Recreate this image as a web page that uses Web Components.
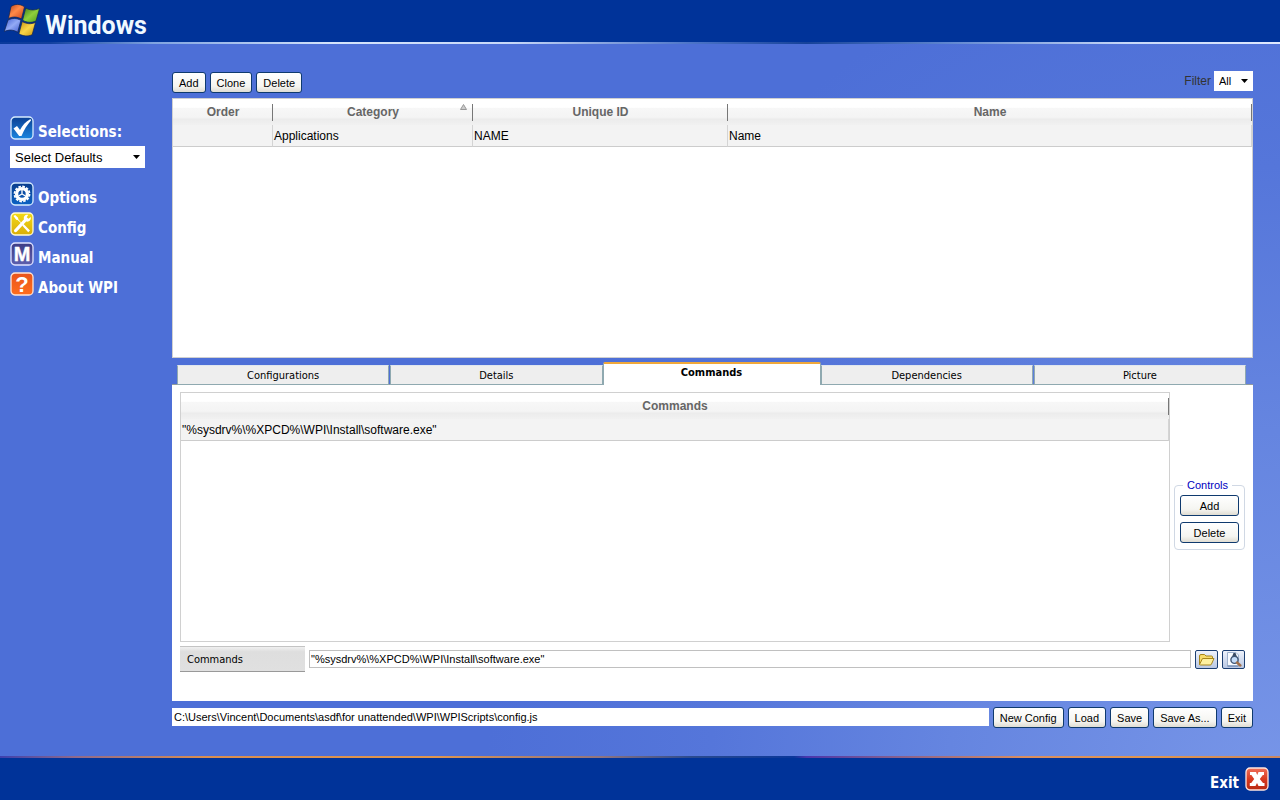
<!DOCTYPE html>
<html lang="en">
<head>
<meta charset="utf-8">
<meta name="viewport" content="width=device-width, initial-scale=1">
<title>WPI Config</title>
<style>
    html, body { margin: 0; padding: 0; }
    body {
        font-family: "Liberation Sans", Arial, sans-serif;
        font-size: 12px;
        color: #000;
        background: #4d6fd7;
        --ui: "DejaVu Sans Condensed", Tahoma, sans-serif;
    }
</style>
</head>
<body>
<wpi-shell>
    <wpi-logo slot="header"></wpi-logo>

    <wpi-sidebar slot="side"></wpi-sidebar>

    <wpi-toolbar>
        <wpi-button>Add</wpi-button>
        <wpi-button>Clone</wpi-button>
        <wpi-button>Delete</wpi-button>
        <wpi-select slot="end" label="Filter" value="All" small></wpi-select>
    </wpi-toolbar>
    <wpi-grid class="items" columns="Order:100|Category:200:sorted|Unique ID:255|Name" row="|Applications|NAME|Name"></wpi-grid>
    <wpi-tabs tabs="Configurations|Details|Commands|Dependencies|Picture" active="Commands">
        <wpi-commands></wpi-commands>
    </wpi-tabs>
    <wpi-file-bar path="C:\Users\Vincent\Documents\asdf\for unattended\WPI\WPIScripts\config.js">
        <wpi-button>New Config</wpi-button>
        <wpi-button>Load</wpi-button>
        <wpi-button>Save</wpi-button>
        <wpi-button>Save As...</wpi-button>
        <wpi-button>Exit</wpi-button>
    </wpi-file-bar>

    <wpi-link slot="footer" icon="exit" reverse>Exit</wpi-link>
</wpi-shell>

<script>
const icons = {
    check: `
        <defs><linearGradient id="g" x2="0" y2="1"><stop stop-color="#0a3f93"/><stop offset="1" stop-color="#1b86e0"/></linearGradient></defs>
        <rect x="1" y="1" width="22" height="22" rx="4" fill="url(#g)" stroke="#d6ecff" stroke-width="1.3"/>
        <path d="M3.500 12.500l3.500-2.500 3 4C12.400 9.500 15.500 5.500 20.500 3l.5 1.500C17.500 8.500 14 13.500 11.500 20H9.200z" fill="#fff"/>`,
    gear: `
        <defs><linearGradient id="g" x2="0" y2="1"><stop stop-color="#0a3c8c"/><stop offset="1" stop-color="#0b62c4"/></linearGradient></defs>
        <rect x="1" y="1" width="22" height="22" rx="4" fill="url(#g)" stroke="#d6ecff" stroke-width="1.3"/>
        <circle cx="12" cy="12" r="7.500" fill="none" stroke="#fff" stroke-width="1.800" stroke-dasharray="2.600 1.330"/>
        <circle cx="12" cy="12" r="5.400" fill="none" stroke="#fff" stroke-width="3.400"/>
        <path d="M12 12V8M12 12l-3.500 2M12 12l3.500 2" stroke="#fff" stroke-width="1.300"/>`,
    tools: `
        <defs><linearGradient id="g" x2="0" y2="1"><stop stop-color="#f3da16"/><stop offset="1" stop-color="#d9ad08"/></linearGradient></defs>
        <rect x="1" y="1" width="22" height="22" rx="4" fill="url(#g)" stroke="#fffbd0" stroke-width="1.3"/>
        <path d="M3.500 4l1.600-1 3 2.800.2 1.500 4 4.500 1.500.4 6.200 6.300-1.800 1.800-5.800-6.500-.2-1.500-4.500-4.300-1.500-.2z" fill="#fff"/>
        <path d="M20.800 5l-2.300 1.800-1.800-1.500 1.600-2.600c-3-.5-5.200 1.600-4.300 4.500L4.300 17.700c-1 1.500.8 3.300 2.400 2L16.200 9.500c2.600.8 5.200-1.400 4.600-4.500z" fill="#fff"/>`,
    manual: `
        <defs><linearGradient id="g" x2="0" y2="1"><stop stop-color="#3c3c85"/><stop offset="1" stop-color="#5d5fae"/></linearGradient></defs>
        <rect x="1" y="1" width="22" height="22" rx="4" fill="url(#g)" stroke="#dfe2ff" stroke-width="1.3"/>
        <text x="12" y="19" text-anchor="middle" font-family="Liberation Sans, Arial, sans-serif" font-size="20" fill="#fff" stroke="#fff" stroke-width=".4">M</text>`,
    about: `
        <defs><linearGradient id="g" x2="0" y2="1"><stop stop-color="#e8541c"/><stop offset="1" stop-color="#ff6d1d"/></linearGradient></defs>
        <rect x="1" y="1" width="22" height="22" rx="4" fill="url(#g)" stroke="#ffe4d4" stroke-width="1.3"/>
        <text x="12" y="20" text-anchor="middle" font-family="Liberation Sans, Arial, sans-serif" font-size="22" font-weight="bold" fill="#fff">?</text>`,
    exit: `
        <defs><linearGradient id="g" x2="0" y2="1"><stop stop-color="#f0705a"/><stop offset=".5" stop-color="#d83a20"/><stop offset="1" stop-color="#b82a12"/></linearGradient></defs>
        <rect x="1" y="1" width="22" height="22" rx="4" fill="url(#g)" stroke="#ffe6e0" stroke-width="1.3"/>
        <path d="M5 5h6l1.200 3L13.500 5h5.500v3h-1.200L14.800 12l3.200 4h1.500v3h-6L12 16l-1.500 3H4.800v-3h1.400L9.200 12 6.400 8H5z" fill="#fff"/>`
};

// shared helper: open shadow root filled with markup
class WpiElement extends HTMLElement {
    connectedCallback() {
        if (!this.shadowRoot) this.attachShadow({ mode: "open" });
        this.shadowRoot.innerHTML = this.render();
    }
}

class WpiShell extends WpiElement {
    render() {
        return `
            <style>
                :host {
                    display: flex; flex-direction: column; min-height: 100vh;
                    background: radial-gradient(ellipse 62% 110% at 100% 100%, #7896e8 0%, #6585e0 42%, #5576da 72%, #4d6fd7 100%);
                }
                header, footer { box-sizing: border-box; height: 44px; background: #003399; display: flex; }
                header { border-bottom: 2px solid; border-image: linear-gradient(90deg, #0a3a9c 0, #12409f 4%, #7fa3e0 12%, #d5e4fb 26%, #c7d8f8 40%, #4c74c8 54%, #164299 63%, #5f86d0 74%, #c7d8f8 88%, #dfe9ff 100%) 1; padding: 0 4px; }
                footer { border-top: 2px solid; border-image: linear-gradient(90deg, #3b3fae 0, #8f6a8c 6%, #d98e50 16%, #e0964e 34%, #8f7480 47%, #2a4a8e 54%, #0a379a 62%, #4a35ac 63%, #7d5a92 69%, #d98e60 80%, #e0964e 90%, #c98660 100%) 1; justify-content: flex-end; align-items: flex-start; padding: 9px 11px; }
                .body { flex: 1; display: flex; }
                aside { flex: 0 0 172px; box-sizing: border-box; padding: 72px 27px 0 10px; }
                main { flex: 1; min-width: 0; display: flex; flex-direction: column; padding: 28px 27px 28px 0; }
                ::slotted(.items) { height: 260px; margin: 5px 0 4px; }
                ::slotted(wpi-tabs) { flex: 1; }
            </style>
            <header><slot name="header"></slot></header>
            <div class="body">
                <aside><slot name="side"></slot></aside>
                <main><slot></slot></main>
            </div>
            <footer><slot name="footer"></slot></footer>
        `;
    }
}

class WpiLogo extends WpiElement {
    render() {
        return `
            <style>
                :host { display: flex; align-items: flex-start; gap: 5px; padding-top: 4px; }
                span { font: bold 25px/44px Roboto, "Liberation Sans", sans-serif; color: #f0f9ff; }
            </style>
            <svg width="36" height="34" viewBox="0 0 36 34" aria-hidden="true">
                <defs>
                    <linearGradient id="r" x2="1" y2="1"><stop stop-color="#b8401c"/><stop offset=".45" stop-color="#ff8a48"/><stop offset="1" stop-color="#c8401a"/></linearGradient>
                    <linearGradient id="v" x2="1" y2="1"><stop stop-color="#3f7a1c"/><stop offset=".5" stop-color="#8fd03c"/><stop offset="1" stop-color="#4c9a1c"/></linearGradient>
                    <linearGradient id="b" x2="1" y2="1"><stop stop-color="#3c5bd0"/><stop offset=".5" stop-color="#93aaf5"/><stop offset="1" stop-color="#3f5bcf"/></linearGradient>
                    <linearGradient id="y" x2="1" y2="1"><stop stop-color="#c9900f"/><stop offset=".5" stop-color="#fbd648"/><stop offset="1" stop-color="#c9930c"/></linearGradient>
                </defs>
                <path d="M7 2.500C11-.2 15.500-.4 20.500 2.800l-3 12.200C13 12.600 9 12.400 4.500 14.400z" fill="url(#r)" stroke="#12244f" stroke-width=".7"/>
                <path d="M21.700 4C26 6.500 30.500 6.500 35.500 4.500l-3.500 12.500c-4.500 2-9 1.800-13.400-.8z" fill="url(#v)" stroke="#12244f" stroke-width=".7"/>
                <path d="M4 16c4.300-2.200 8.500-2 12.900.3l-3.200 12C9.500 25.800 5 25.300.3 27.500z" fill="url(#b)" stroke="#12244f" stroke-width=".7"/>
                <path d="M18.200 17.600c4.400 2.400 8.800 2.800 13.300.8l-3.300 12.300c-4.500 2-9 1.500-13.300-.9z" fill="url(#y)" stroke="#12244f" stroke-width=".7"/>
            </svg>
            <span>Windows</span>
        `;
    }
}

class WpiLink extends WpiElement {
    render() {
        const reverse = this.hasAttribute("reverse");
        return `
            <style>
                :host { display: block; }
                a { display: flex; flex-direction: ${reverse ? "row-reverse" : "row"}; align-items: flex-end; gap: ${reverse ? 6 : 4}px; height: 24px; color: #fff; text-decoration: none; font: bold 15px/16px var(--ui); white-space: nowrap; }
                svg { flex: none; }
            </style>
            <a href="#"><svg width="24" height="24" viewBox="0 0 24 24" aria-hidden="true">${icons[this.getAttribute("icon")]}</svg><slot></slot></a>
        `;
    }
}

class WpiSelect extends WpiElement {
    render() {
        const label = this.getAttribute("label");
        const small = this.hasAttribute("small");
        return `
            <style>
                :host { display: flex; align-items: center; gap: 3px; }
                label { color: #333; }
                .hidden { display: none; }
                .box { display: grid; align-items: center; flex: ${small ? "0 0 39px" : "1"}; height: ${small ? 20 : 22}px; background: #fff; }
                select, svg { grid-area: 1 / 1; }
                select { appearance: none; width: 100%; height: 100%; border: 0; border-radius: 0; background: transparent; margin: 0; padding: 0 5px; font: ${small ? 11 : 13}px "Liberation Sans", Arial, sans-serif; color: #000; }
                svg { justify-self: end; margin-right: 5px; pointer-events: none; }
            </style>
            <label for="s" class="${small ? "" : "hidden"}">${label}</label>
            <div class="box">
                <select id="s" aria-label="${label}"><option>${this.getAttribute("value")}</option></select>
                <svg width="7" height="4" viewBox="0 0 7 4"><path d="M0 0h7L3.500 4z"/></svg>
            </div>
        `;
    }
}

class WpiSidebar extends WpiElement {
    render() {
        return `
            <style>
                :host { display: block; }
                wpi-select { margin: 6px 0 14px; }
                nav { display: flex; flex-direction: column; gap: 6px; }
            </style>
            <wpi-link icon="check">Selections:</wpi-link>
            <wpi-select label="Selections" value="Select Defaults"></wpi-select>
            <nav>
                <wpi-link icon="gear">Options</wpi-link>
                <wpi-link icon="tools">Config</wpi-link>
                <wpi-link icon="manual">Manual</wpi-link>
                <wpi-link icon="about">About WPI</wpi-link>
            </nav>
        `;
    }
}

class WpiButton extends WpiElement {
    render() {
        return `
            <style>
                :host { display: block; }
                button { box-sizing: border-box; width: 100%; height: 21px; padding: 0 6px; border: 1px solid #0f3a6e; border-radius: 3px; background: linear-gradient(#fff, #f5f5f1 70%, #dfdcd2); color: #000; font: 11px/18px "Liberation Sans", Arial, sans-serif; white-space: nowrap; }
            </style>
            <button type="button"><slot></slot></button>
        `;
    }
}

class WpiToolbar extends WpiElement {
    render() {
        return `
            <style>
                :host { display: flex; gap: 4px; height: 21px; }
                ::slotted([slot="end"]) { margin-left: auto; margin-bottom: 3px; }
            </style>
            <slot></slot><slot name="end"></slot>
        `;
    }
}

class WpiGrid extends WpiElement {
    render() {
        const columns = this.getAttribute("columns").split("|").map((c) => c.split(":"));
        const cells = this.getAttribute("row").split("|");
        const arrow = `<svg width="7" height="6" viewBox="0 0 7 6"><path d="M.5 5.500L3.500.5l3 5z" fill="#ccc" stroke="#999"/></svg>`;
        return `
            <style>
                :host { display: block; box-sizing: border-box; background: #fff; border: 1px solid #d0d0d0; }
                table { width: 100%; table-layout: fixed; border-collapse: separate; border-spacing: 0; }
                th {
                    position: relative; height: 26px; padding: 0; color: #666; font: bold 12px/16px "Liberation Sans", Arial, sans-serif;
                    background: linear-gradient(#777, #777) 100% 5px / 1px 17px no-repeat, linear-gradient(#fff 0, #fff 32%, #f7f7f7 36%, #f4f4f4 70%, #ececec 78%, #f1f1f1 100%);
                }
                th svg { position: absolute; right: 6px; top: 5px; }
                td { height: 21px; padding: 0 1px; font: 12px/16px "Liberation Sans", Arial, sans-serif; background: #f3f3f3; border-right: 1px solid #d4d4d4; border-bottom: 1px solid #ccc; white-space: nowrap; }
            </style>
            <table>
                <colgroup>${columns.map((c) => `<col${c[1] ? ` style="width: ${c[1]}px"` : ""}>`).join("")}</colgroup>
                <thead><tr>${columns.map((c) => `<th scope="col">${c[0]}${c[2] ? arrow : ""}</th>`).join("")}</tr></thead>
                <tbody><tr>${cells.map((c) => `<td>${c}</td>`).join("")}</tr></tbody>
            </table>
        `;
    }
}

class WpiTabs extends WpiElement {
    render() {
        const active = this.getAttribute("active");
        const tabs = this.getAttribute("tabs").split("|").map((name) => `
            <button type="button" role="tab" aria-selected="${name === active}">${name}</button>`).join("");
        return `
            <style>
                :host { display: flex; flex-direction: column; }
                .strip { display: flex; align-items: flex-end; gap: 1px; height: 23px; padding: 0 7px 0 5px; background: linear-gradient(#919b9c, #919b9c) 0 100% / 100% 1px no-repeat; }
                button { flex: 1 1 0; box-sizing: border-box; height: 20px; padding: 1px 0 0; border: 1px solid #8fa9b0; border-top-color: #dfe6ee; background: #eee; color: #000; font: 11px/18px var(--ui); }
                button[aria-selected="true"] { flex: 0 0 218px; height: 23px; margin: 0 -1px; padding: 0 0 3px; border-top: 2px solid #f0a83a; border-bottom: 0; border-radius: 2px 2px 0 0; background: #fff; font-weight: bold; }
                .panel { flex: 1; display: flex; background: #fff; padding: 7px 8px 29px; }
                ::slotted(*) { flex: 1; min-width: 0; }
            </style>
            <div class="strip" role="tablist">${tabs}</div>
            <div class="panel" role="tabpanel"><slot></slot></div>
        `;
    }
}

class WpiCommands extends WpiElement {
    render() {
        const command = `&quot;%sysdrv%\\%XPCD%\\WPI\\Install\\software.exe&quot;`;
        return `
            <style>
                :host { display: flex; flex-direction: column; gap: 4px; }
                .top { flex: 1; display: flex; gap: 4px; align-items: center; }
                wpi-grid { flex: 1; align-self: stretch; min-height: 250px; }
                fieldset { flex: 0 0 71px; box-sizing: border-box; margin: 0 0 6px; padding: 3px 5px 6px; border: 1px solid #d0d8e4; border-radius: 4px; }
                legend { margin-left: 3px; padding: 0 4px; color: #0000c0; font: 11px/14px "Liberation Sans", Arial, sans-serif; }
                .buttons { display: flex; flex-direction: column; gap: 6px; }
                .field { display: flex; align-items: center; gap: 4px; }
                label { flex: 0 0 125px; box-sizing: border-box; height: 26px; padding: 1px 0 0 7px; background: linear-gradient(#f0f0f0, #dedede 20%, #e0e0e0); border-top: 1px solid #c4c4c4; border-bottom: 1px solid #999; font: 11px/24px var(--ui); }
                input { flex: 1; min-width: 0; box-sizing: border-box; height: 18px; border: 1px solid #c0c0c0; padding: 0 1px; font: 11px/16px "Liberation Sans", Arial, sans-serif; color: #000; }
                .icon { box-sizing: border-box; width: 23px; height: 19px; padding: 0; border: 1px solid #1c3f72; border-radius: 2px; background: linear-gradient(#eef2fb, #b9c8e4); display: flex; align-items: center; justify-content: center; }
            </style>
            <div class="top">
                <wpi-grid columns="Commands" row="${command}"></wpi-grid>
                <fieldset>
                    <legend>Controls</legend>
                    <div class="buttons">
                        <wpi-button>Add</wpi-button>
                        <wpi-button>Delete</wpi-button>
                    </div>
                </fieldset>
            </div>
            <div class="field">
                <label for="cmd">Commands</label>
                <input id="cmd" type="text" value="${command}">
                <button class="icon" type="button" aria-label="Browse">
                    <svg width="17" height="15" viewBox="0 0 17 15">
                        <path d="M1.500 12V4q0-1.500 1.500-1.500h3.500l1.500 1.500h5.500q1 0 1 1V7" fill="#f7dc6a" stroke="#a8861a"/>
                        <path d="M1.500 12.500L4.500 6.500H16L13.500 12q-.3 1-1.300 1H2.500q-1 0-1-.8z" fill="#fdf0a0" stroke="#a8861a"/>
                    </svg>
                </button>
                <button class="icon" type="button" aria-label="Preview">
                    <svg width="17" height="15" viewBox="0 0 17 15">
                        <path d="M2.500.5h8.500l2.500 2.500v11h-11z" fill="#f8fbff" stroke="#9fb2cd"/>
                        <path d="M2.500 14h11" stroke="#5a78a8"/>
                        <path d="M7 5l1.500-4h2L12 5z" fill="#3a4a60"/>
                        <circle cx="9.500" cy="7.800" r="3.600" fill="#c4dcf8" stroke="#3f5675" stroke-width="1.400"/>
                        <path d="M12 10.500l3.300 3" stroke="#a0704c" stroke-width="2.500" stroke-linecap="round"/>
                    </svg>
                </button>
            </div>
        `;
    }
}

class WpiFileBar extends WpiElement {
    render() {
        return `
            <style>
                :host { display: flex; align-items: center; gap: 4px; margin-top: 6px; }
                input { flex: 1; min-width: 0; height: 18px; margin: 0 0 2px; border: 0; padding: 0 2px; background: #fff; font: 11px/16px "Liberation Sans", Arial, sans-serif; color: #000; }
            </style>
            <input type="text" aria-label="Config file" value="${this.getAttribute("path")}">
            <slot></slot>
        `;
    }
}

customElements.define("wpi-shell", WpiShell);
customElements.define("wpi-logo", WpiLogo);
customElements.define("wpi-link", WpiLink);
customElements.define("wpi-select", WpiSelect);
customElements.define("wpi-sidebar", WpiSidebar);
customElements.define("wpi-button", WpiButton);
customElements.define("wpi-toolbar", WpiToolbar);
customElements.define("wpi-grid", WpiGrid);
customElements.define("wpi-tabs", WpiTabs);
customElements.define("wpi-commands", WpiCommands);
customElements.define("wpi-file-bar", WpiFileBar);
</script>
</body>
</html>
